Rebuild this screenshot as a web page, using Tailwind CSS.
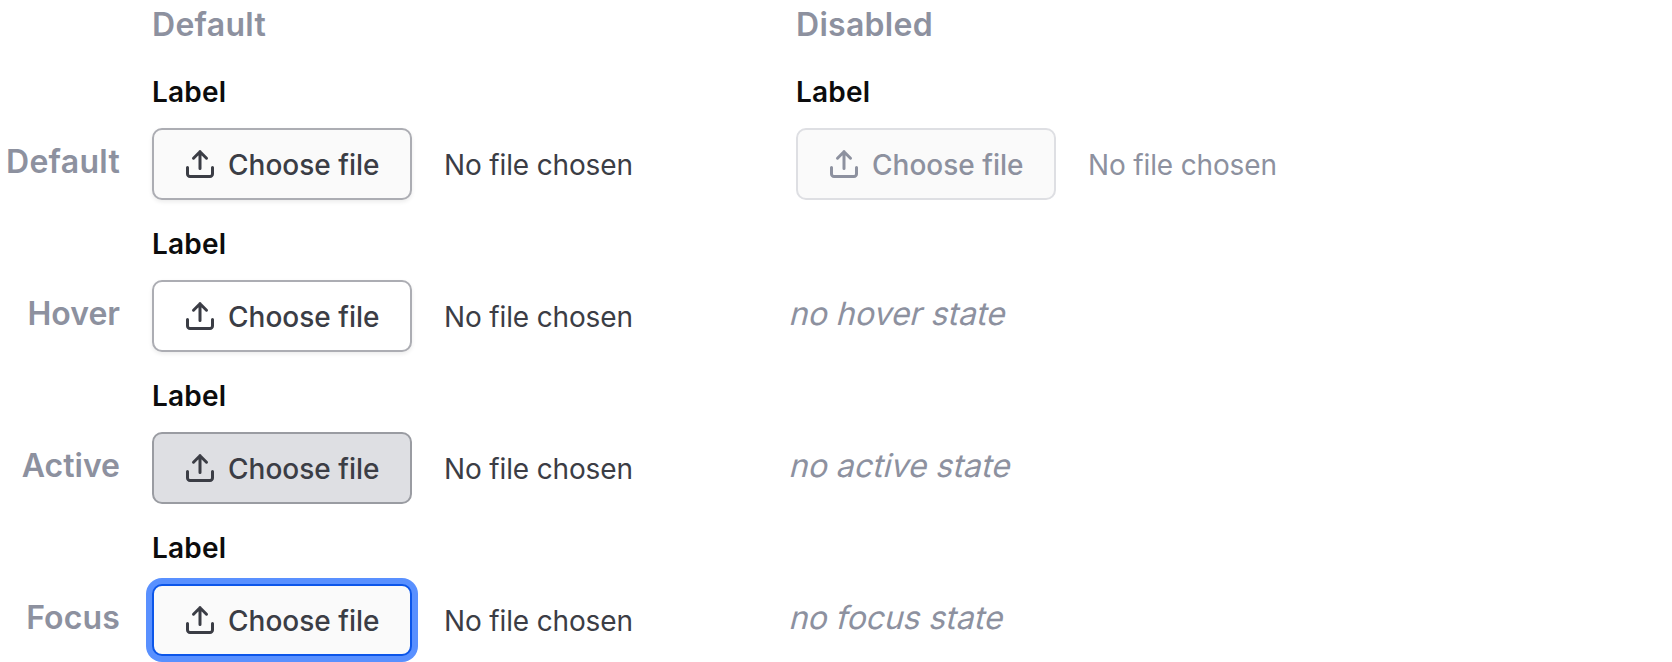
<!DOCTYPE html>
<html lang="en">
<head>
<meta charset="utf-8">
<title>File input states</title>
<script src="https://cdn.jsdelivr.net/npm/@tailwindcss/browser@4"></script>
</head>
<body class="h-[662px] overflow-hidden bg-white font-['Inter',sans-serif] antialiased">
<svg class="hidden">
  <symbol id="upload" viewBox="0 0 32 32" fill="none" stroke="currentColor" stroke-width="3" stroke-linecap="round" stroke-linejoin="round">
    <path d="M3.5 19.5v6.5a2.5 2.5 0 0 0 2.5 2.5h20a2.5 2.5 0 0 0 2.5-2.5v-6.5M16 20.5v-17M9.5 10.2 16 3.7l6.5 6.5"/>
  </symbol>
</svg>
<main class="grid grid-cols-[120px_612px_1fr] gap-x-8 gap-y-6 text-[32px] leading-[48px] text-[#8d919f]">
  <div></div>
  <h2 class="h-12 pt-px font-semibold tracking-[0.28px]">Default</h2>
  <h2 class="h-12 pt-px font-semibold tracking-[0.28px]">Disabled</h2>

  <div class="pt-[66px] text-right font-semibold tracking-[0.28px]">Default</div>
  <div class="flex h-32 flex-col gap-4 text-[28px] leading-10">
    <label class="h-10 font-semibold tracking-[0.2px] text-[#0c0c0d]">Label</label>
    <div class="flex items-center gap-8 text-[#3b3d45]">
      <button class="flex h-[72px] w-[260px] items-center gap-3 rounded-[10px] border-2 border-[#acadb3] bg-[#fafafa] pl-[30px] font-medium whitespace-nowrap shadow-[0_2px_4px_rgba(0,0,0,0.08)]"><svg class="size-8 shrink-0"><use href="#upload"/></svg><span class="pt-0.5">Choose file</span></button>
      <span class="pt-0.5 tracking-[-0.15px]">No file chosen</span>
    </div>
  </div>
  <div class="flex h-32 flex-col gap-4 text-[28px] leading-10">
    <label class="h-10 font-semibold tracking-[0.2px] text-[#0c0c0d]">Label</label>
    <div class="flex items-center gap-8">
      <button disabled class="flex h-[72px] w-[260px] items-center gap-3 rounded-[10px] border-2 border-[#dedfe3] bg-[#fafafa] pl-[30px] font-medium whitespace-nowrap"><svg class="size-8 shrink-0"><use href="#upload"/></svg><span class="pt-0.5">Choose file</span></button>
      <span class="pt-0.5 tracking-[-0.15px]">No file chosen</span>
    </div>
  </div>

  <div class="pt-[66px] text-right font-semibold">Hover</div>
  <div class="flex h-32 flex-col gap-4 text-[28px] leading-10">
    <label class="h-10 font-semibold tracking-[0.2px] text-[#0c0c0d]">Label</label>
    <div class="flex items-center gap-8 text-[#3b3d45]">
      <button class="flex h-[72px] w-[260px] items-center gap-3 rounded-[10px] border-2 border-[#acadb3] bg-white pl-[30px] font-medium whitespace-nowrap shadow-[0_2px_4px_rgba(0,0,0,0.08)]"><svg class="size-8 shrink-0"><use href="#upload"/></svg><span class="pt-0.5">Choose file</span></button>
      <span class="pt-0.5 tracking-[-0.15px]">No file chosen</span>
    </div>
  </div>
  <div class="-ml-2 pt-[66px]"><em class="inline-block origin-[0_36px] -skew-x-[14deg] not-italic">no hover state</em></div>

  <div class="pt-[66px] text-right font-semibold">Active</div>
  <div class="flex h-32 flex-col gap-4 text-[28px] leading-10">
    <label class="h-10 font-semibold tracking-[0.2px] text-[#0c0c0d]">Label</label>
    <div class="flex items-center gap-8 text-[#3b3d45]">
      <button class="flex h-[72px] w-[260px] items-center gap-3 rounded-[10px] border-2 border-[#9a9ca2] bg-[#dedfe3] pl-[30px] font-medium whitespace-nowrap"><svg class="size-8 shrink-0"><use href="#upload"/></svg><span class="pt-0.5">Choose file</span></button>
      <span class="pt-0.5 tracking-[-0.15px]">No file chosen</span>
    </div>
  </div>
  <div class="-ml-2 pt-[66px]"><em class="inline-block origin-[0_36px] -skew-x-[14deg] not-italic">no active state</em></div>

  <div class="pt-[66px] text-right font-semibold tracking-[0.15px]">Focus</div>
  <div class="flex h-32 flex-col gap-4 text-[28px] leading-10">
    <label class="h-10 font-semibold tracking-[0.2px] text-[#0c0c0d]">Label</label>
    <div class="flex items-center gap-8 text-[#3b3d45]">
      <button class="flex h-[72px] w-[260px] items-center gap-3 rounded-[10px] border-2 border-[#0c56e9] bg-[#fafafa] pl-[30px] font-medium whitespace-nowrap shadow-[0_0_0_6px_#5990ff]"><svg class="size-8 shrink-0"><use href="#upload"/></svg><span class="pt-0.5">Choose file</span></button>
      <span class="pt-0.5 tracking-[-0.15px]">No file chosen</span>
    </div>
  </div>
  <div class="-ml-2 pt-[66px]"><em class="inline-block origin-[0_36px] -skew-x-[14deg] tracking-[-0.08px] not-italic">no focus state</em></div>
</main>
</body>
</html>
